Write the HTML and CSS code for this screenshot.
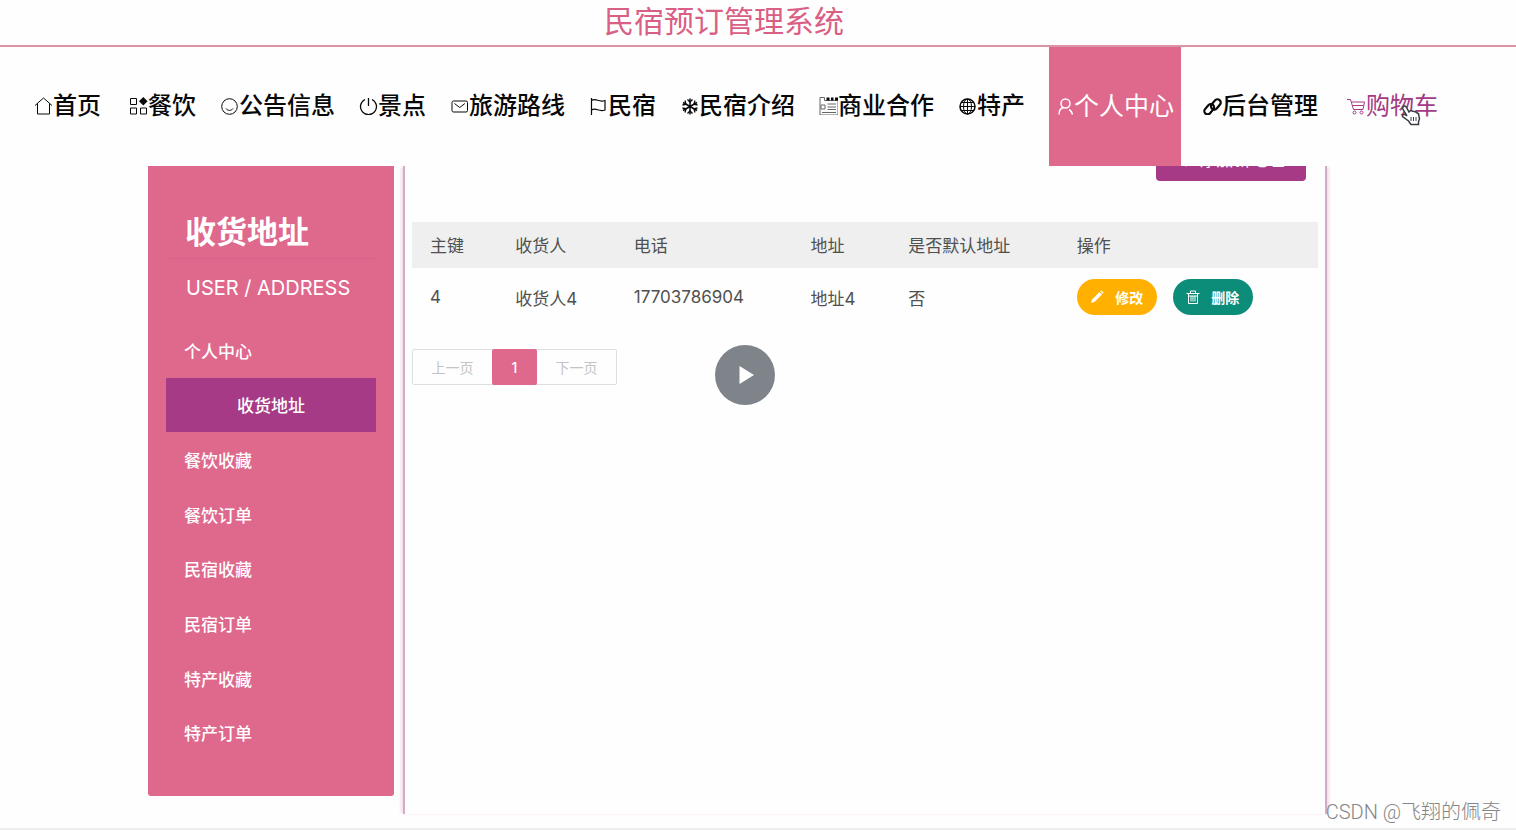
FILE: index.html
```html
<!DOCTYPE html>
<html lang="zh-CN">
<head>
<meta charset="utf-8">
<title>民宿预订管理系统</title>
<link rel="stylesheet" href="styles.css">
</head>
<body>
<header class="site-header"><h1 class="site-title">民宿预订管理系统</h1></header>
<nav class="nav">
  <a class="nav-item nav-home" href="#"><svg class="icon" viewBox="0 0 19 19"><path d="M1 9.5 9.5 2 18 9.5M3.5 7.5V18h12V7.5" /></svg>首页</a>
  <a class="nav-item" href="#"><svg class="icon" viewBox="0 0 19 19"><path d="M1.500 2.500h6v6h-6zM1.500 12h6v6h-6zM11.500 12h6v6h-6z"/><path class="solid" d="m14.300 1 4.300 4.300-4.300 4.300L10 5.300z"/></svg>餐饮</a>
  <a class="nav-item" href="#"><svg class="icon" viewBox="0 0 19 19"><circle cx="9.500" cy="10.500" r="7.800"/><path d="M6 12.500c1.500 2.500 5.500 2.500 7 0"/></svg>公告信息</a>
  <a class="nav-item" href="#"><svg class="icon" viewBox="0 0 19 19"><path d="M9.500 2v8M6 3.500a8 8 0 1 0 7 0" stroke-width="1.300"/></svg>景点</a>
  <a class="nav-item" href="#"><svg class="icon" viewBox="0 0 19 19"><rect x="2" y="5" width="15.500" height="11" rx="1.500"/><path d="m4.500 7.500 5.200 4 5.200-4"/></svg>旅游路线</a>
  <a class="nav-item" href="#"><svg class="icon" viewBox="0 0 19 19"><path d="M2.500 2v17M2.500 4.500c5-3 7 2.500 13.500 0v9.500c-6.500 2.500-8.500-3-13.500 0" stroke-width="1.200"/></svg>民宿</a>
  <a class="nav-item" href="#"><svg class="icon" viewBox="0 0 19 19"><path d="M10 2.500v16M3 6.500l14 8M3 14.500l14-8" stroke-width="1.500"/><path d="M7.500 3.500 10 6l2.500-2.500M7.500 17.500 10 15l2.500 2.500M2.500 9l3.500-.8L5 4.500M17.500 9l-3.500-.8 1-3.700M2.500 12l3.500.8-1 3.700M17.500 12l-3.500.8 1 3.700" stroke-width="1.300"/></svg>民宿介绍</a>
  <a class="nav-item" href="#"><svg class="icon thin" viewBox="0 0 19 19"><path d="M1 1.500h4.500v3H19V19H1zM2 9h4v4H2zM8.500 8H17M8.500 11H17M8.500 13.500H17M3 16.500h14"/><path class="tabs" d="M7.500 3h3M12 3h2.500M16 3h3"/></svg>商业合作</a>
  <a class="nav-item" href="#"><svg class="icon" viewBox="0 0 19 19"><circle cx="9.500" cy="10.500" r="7.500" stroke-width="1.500"/><ellipse cx="9.500" cy="10.500" rx="4" ry="7.500"/><path d="M9.500 3v15M2 10.500h15M3.500 6.500h12M3.500 14.500h12"/></svg>特产</a>
  <a class="nav-item nav-active" href="#"><svg class="icon" viewBox="0 0 17 19"><circle cx="8.500" cy="7.500" r="4.500" stroke-width="1.500"/><path d="M2 18.500c0-4 2-6.500 4.500-7M12 13.500c2 1 3 3 3.500 5" stroke-width="1.500"/></svg>个人中心</a>
  <a class="nav-item nav-admin" href="#"><svg class="icon" viewBox="0 0 19 19"><g transform="rotate(-50 9.500 10.500)" stroke-width="2.200"><rect x="-.5" y="6.500" width="11.500" height="6.500" rx="3.200"/><rect x="7.500" y="8.500" width="11.500" height="6.500" rx="3.200"/></g></svg>后台管理</a>
  <a class="nav-item nav-cart" href="#"><svg class="icon" viewBox="0 0 19 19"><path d="M0 3.500h3.500l3 10h9.500l1.500-7.500H4.500M5.500 9.500h11"/><circle cx="7.500" cy="16.500" r="1.500"/><circle cx="14.500" cy="16.500" r="1.500"/></svg>购物车<svg class="pointer" viewBox="0 0 20 22"><path d="M2 3c1-1.500 2.500-1.200 3.500.3L8 8l1.500-1.500 2.500.8 2.500.5 3 2 1 5-1 3v2.700H10l-2.500-3.500-6-4.500c-.5-2 1.500-2.500 3.500-1.500L6 12 2 5.500C1.500 4.500 1.500 3.700 2 3z"/><path d="M10 13v4M12.500 13v4M15 13v4" stroke-width="1"/></svg></a>
</nav>
<main class="main">
  <aside class="sidebar">
    <h2 class="side-title">收货地址</h2>
    <p class="side-sub">USER / ADDRESS</p>
    <div class="menu">
      <a class="menu-item" href="#">个人中心</a>
      <a class="menu-item menu-active" href="#">收货地址</a>
      <a class="menu-item" href="#">餐饮收藏</a>
      <a class="menu-item" href="#">餐饮订单</a>
      <a class="menu-item" href="#">民宿收藏</a>
      <a class="menu-item" href="#">民宿订单</a>
      <a class="menu-item" href="#">特产收藏</a>
      <a class="menu-item" href="#">特产订单</a>
    </div>
  </aside>
  <section class="panel">
    <div class="toolbar"><button class="add">＋ 添加新地址</button></div>
    <table class="table">
      <colgroup><col class="c-id"><col class="c-name"><col class="c-tel"><col class="c-addr"><col class="c-def"><col class="c-op"></colgroup>
      <thead><tr><th>主键</th><th>收货人</th><th>电话</th><th>地址</th><th>是否默认地址</th><th>操作</th></tr></thead>
      <tbody><tr><td>4</td><td>收货人4</td><td>17703786904</td><td>地址4</td><td>否</td><td><div class="ops">
        <button class="op edit"><svg class="op-icon" viewBox="0 0 14 14"><path class="solid" d="M1 13l1-3.500L9.500 2l2.500 2.500L4.500 12zM10.200 1.300l1-1 2.500 2.500-1 1z"/></svg>修改</button>
        <button class="op del"><svg class="op-icon" viewBox="0 0 14 14"><path d="M.5 3.500h13M4.500 3V1h5v2M2.500 4v9.500h9V4M5 6v5.500M7 6v5.500M9 6v5.500M2.500 6h9"/></svg>删除</button>
      </div></td></tr></tbody>
    </table>
    <div class="pager">
      <button class="page" disabled>上一页</button><button class="page current">1</button><button class="page" disabled>下一页</button>
    </div>
  </section>
</main>
<footer class="foot"></footer>
<button class="play" aria-label="播放"><svg viewBox="0 0 60 60"><path d="M24.500 21v18L39 30z"/></svg></button>
<div class="watermark">CSDN @飞翔的佩奇</div>
</body>
</html>
```
FILE: styles.css
```css
* { box-sizing: border-box; }
body {
  margin: 0;
  min-height: 100vh;
  position: relative;
  display: flex;
  flex-direction: column;
  background: #fefefe;
  color: #505050;
  font-family: Inter, "Noto Sans CJK SC", sans-serif;
  font-size: 17px;
}
a { color: inherit; text-decoration: none; }
button { font: inherit; border: 0; padding: 0; }
svg { fill: none; stroke: currentColor; stroke-width: 1; }
.solid { fill: currentColor; stroke: none; }

.site-header {
  height: 47px;
  padding-right: 68px;
  border-bottom: 2px solid #dc93a6;
}
.site-title {
  margin: 0;
  text-align: center;
  font-size: 30px;
  line-height: 42px;
  font-weight: 400;
  color: #d95f84;
}

.nav {
  position: relative;
  z-index: 1;
  display: flex;
  gap: 24px;
  height: 119px;
  padding-left: 34px;
  background: #fefefe;
  color: #080808;
  font-size: 24px;
  font-weight: 500;
  white-space: nowrap;
}
.nav-item { display: flex; align-items: center; padding-bottom: 6px; }
.icon { width: 19px; height: 19px; flex: none; margin-top: 4px; }
.thin { stroke: #666; }
.tabs { stroke: #080808; stroke-width: 3; }
.nav-home { margin-right: 4px; }
.nav-active {
  padding: 0 7px 6px 8px;
  background: #df688d;
  color: #fff;
  font-size: 25px;
  font-weight: 400;
}
.nav-active .icon { width: 17px; }
.nav-admin { margin-left: -2px; }
.nav-cart { position: relative; margin-left: 5px; color: #a43a84; font-weight: 400; }
.pointer {
  position: absolute;
  left: 54px;
  top: 57px;
  width: 20px;
  height: 22px;
  fill: #fff;
  stroke: #3c3c48;
  stroke-width: 1.5;
}

.main {
  display: grid;
  grid-template-columns: 246px 1fr;
  gap: 9px;
  align-items: start;
  padding: 0 189px 14px 148px;
}
.sidebar {
  padding: 40px 18px 36px;
  border-radius: 0 0 3px 3px;
  background: #df688d;
  color: #fff;
}
.side-title {
  margin: 0;
  padding-left: 19px;
  font-size: 31px;
  line-height: 52px;
  font-weight: 700;
  border-bottom: 1px solid #d4628a;
}
.side-sub {
  margin: 14px 0 19px;
  padding-left: 20px;
  font-size: 20px;
  line-height: 31px;
  white-space: nowrap;
}
.menu { display: grid; grid-auto-rows: 1fr; min-height: 437px; }
.menu-item { display: flex; align-items: center; padding-left: 18px; font-weight: 500; }
.menu-active { justify-content: center; padding: 0; background: #a63a87; }

.panel {
  min-height: 648px;
  padding: 0 7px;
  border: solid #d0afc6;
  border-width: 0 2px;
  box-shadow: -3px 0 3px -1px #f6d8ea, 3px 0 3px -1px #f6d8ea;
}
.toolbar { display: flex; justify-content: flex-end; margin: -25px 12px 41px; }
.add {
  width: 150px;
  height: 40px;
  padding-bottom: 6px;
  border-radius: 4px;
  background: #a63a87;
  color: #fff;
}
.table { width: 100%; table-layout: fixed; border-collapse: collapse; }
.table th, .table td { padding: 0 0 2px 18px; text-align: left; font-weight: 400; }
.table th { height: 46px; background: #efefef; }
.table td { height: 58px; padding-bottom: 0; }
.c-id { width: 9.4%; }
.c-name { width: 13.1%; }
.c-tel { width: 19.5%; }
.c-addr { width: 10.8%; }
.c-def { width: 18.6%; }
.ops { display: flex; gap: 16px; }
.op {
  display: flex;
  align-items: center;
  justify-content: center;
  gap: 11px;
  width: 80px;
  height: 36px;
  border-radius: 18px;
  color: #fff;
  font-size: 14px;
  font-weight: 700;
}
.op-icon { width: 14px; height: 14px; }
.edit { background: #ffb000; }
.del { background: #0b8d79; }
.pager {
  display: inline-flex;
  margin-top: 23px;
  border: 1px solid #dedede;
  border-radius: 2px;
}
.page {
  width: 79px;
  height: 34px;
  background: none;
  color: #c4c4c4;
  font-size: 14px;
}
.current {
  width: 45px;
  height: 36px;
  margin: -1px 0;
  border-radius: 2px;
  background: #df688d;
  color: #fff;
  font-weight: 500;
}
.foot { height: 2px; margin-top: auto; background: #ededed; }
.play {
  position: absolute;
  z-index: 2;
  left: calc(50% - 43px);
  top: 345px;
  width: 60px;
  height: 60px;
  border-radius: 50%;
  background: #7f848b;
}
.play svg { display: block; fill: #fff; stroke: none; }
.watermark {
  position: absolute;
  right: 15px;
  bottom: 3px;
  color: #858585;
  font-family: Roboto, "Noto Sans CJK SC", sans-serif;
  font-size: 20px;
  line-height: 30px;
  font-weight: 300;
}
```
